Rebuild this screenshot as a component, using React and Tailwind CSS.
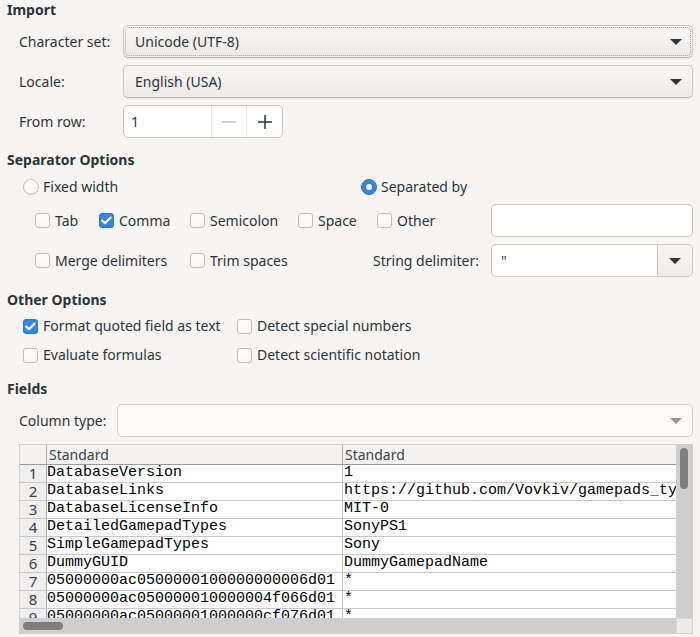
import React from "react";

function Arrow({ color = "#2e3436" }) {
  return (
    <svg width="12" height="6" viewBox="0 0 12 6" className="shrink-0">
      <path d="M0 0H12L6 6Z" fill={color} />
    </svg>
  );
}

function Heading({ children, className = "" }) {
  return (
    <div className={"h-[18px] leading-[19px] pl-[7px] font-bold text-[14px] " + className}>
      {children}
    </div>
  );
}

function Checkbox({ checked }) {
  if (checked) {
    return (
      <span className="w-[15px] h-[15px] shrink-0 rounded-[3px] bg-[#3584e4] border border-[#2a76d4] flex items-center justify-center">
        <svg width="11" height="9" viewBox="0 0 11 9">
          <path d="M1.3 4.6L4.1 7.2L9.6 1.6" stroke="white" strokeWidth="2.2" fill="none" strokeLinecap="round" strokeLinejoin="round" />
        </svg>
      </span>
    );
  }
  return (
    <span className="w-[15px] h-[15px] shrink-0 rounded-[3px] border border-[#c2bdb8] bg-gradient-to-b from-white to-[#f8f7f6]" />
  );
}

function Check({ label, checked, className = "" }) {
  return (
    <div className={"flex items-center gap-[5px] shrink-0 " + className}>
      <Checkbox checked={checked} />
      <span className="whitespace-nowrap">{label}</span>
    </div>
  );
}

function Radio({ label, checked, className = "" }) {
  return (
    <div className={"flex items-center gap-[4px] shrink-0 " + className}>
      {checked ? (
        <span className="w-[16px] h-[16px] rounded-full bg-[#3584e4] border border-[#2a76d4] flex items-center justify-center">
          <span className="w-[6px] h-[6px] rounded-full bg-white" />
        </span>
      ) : (
        <span className="w-[16px] h-[16px] rounded-full border border-[#c2bdb8] bg-gradient-to-b from-white to-[#f8f7f6]" />
      )}
      <span className="whitespace-nowrap">{label}</span>
    </div>
  );
}

function Combo({ text, focused }) {
  return (
    <div className="relative flex-1 h-[33px] rounded-[5px] border border-[#cdc7c2] border-b-[#bfb8b1] bg-gradient-to-b from-[#f6f5f4] to-[#edebe9] shadow-[inset_0_1px_0_white,0_1px_2px_rgba(0,0,0,0.07)] flex items-center pl-[11px] pr-[10px]">
      {focused && (
        <span className="absolute inset-[1px] rounded-[4px] border border-dotted border-[#a8a4a0]" />
      )}
      <span className="flex-1">{text}</span>
      <Arrow />
    </div>
  );
}

function FormRow({ label, labelW, children }) {
  return (
    <div className="flex items-center h-[33px] mr-[7px]">
      <div className={"pl-[19px] shrink-0 " + labelW}>{label}</div>
      {children}
    </div>
  );
}

const rows = [
  ["DatabaseVersion", "1"],
  ["DatabaseLinks", "https://github.com/Vovkiv/gamepads_types"],
  ["DatabaseLicenseInfo", "MIT-0"],
  ["DetailedGamepadTypes", "SonyPS1"],
  ["SimpleGamepadTypes", "Sony"],
  ["DummyGUID", "DummyGamepadName"],
  ["05000000ac0500000100000000006d01", "*"],
  ["05000000ac050000010000004f066d01", "*"],
  ["05000000ac05000001000000cf076d01", "*"],
];

function Grid() {
  return (
    <div className="mt-[7px] ml-[19px] mr-[7px] h-[190px] border border-[#d3cec9] bg-white flex flex-col overflow-hidden">
      <div className="flex h-[173px]">
        <div className="flex-1 overflow-hidden">
          <div className="flex h-[20px] bg-[#f3f2f1] border-b border-[#9a9a9a]">
            <div className="w-[27px] shrink-0 border-r border-[#b0b0b0]" />
            <div className="w-[296px] shrink-0 border-r border-[#b0b0b0] leading-[19px] pl-[2px] text-[#3d4244]">
              Standard
            </div>
            <div className="w-[400px] shrink-0 leading-[19px] pl-[2px] text-[#3d4244]">Standard</div>
          </div>
          {rows.map((r, i) => (
            <div key={i} className="flex h-[18px] border-b border-[#c8c8c8]">
              <div className="w-[27px] shrink-0 bg-[#efefef] border-r border-[#a8a8a8] text-center text-[15px] leading-[16px] text-[#3d4244]">
                {i + 1}
              </div>
              <div className="w-[296px] shrink-0 border-r border-[#c8c8c8] font-['Liberation_Mono',monospace] text-[15px] leading-[16px] text-black whitespace-nowrap overflow-hidden">
                {r[0]}
              </div>
              <div className="w-[400px] shrink-0 pl-[1px] font-['Liberation_Mono',monospace] text-[15px] leading-[16px] text-black whitespace-nowrap">
                {r[1]}
              </div>
            </div>
          ))}
        </div>
        <div className="w-[16px] shrink-0 bg-[#cecece] pt-[3px] pl-[4px]">
          <div className="w-[8px] h-[41px] rounded-full bg-[#7e7e7e]" />
        </div>
      </div>
      <div className="flex h-[15px]">
        <div className="flex-1 bg-[#cecece] pt-[4px] pl-[3px]">
          <div className="w-[40px] h-[8px] rounded-full bg-[#7e7e7e]" />
        </div>
        <div className="w-[16px] shrink-0 bg-[#ebebeb] border-l border-t border-[#d8d8d8]" />
      </div>
    </div>
  );
}

export default function App() {
  return (
    <div className="w-[700px] h-[637px] overflow-hidden bg-[#f6f5f4] text-[#2e3436] font-['Noto_Sans',sans-serif] text-[14px] leading-[18px] flex flex-col">
      <Heading>Import</Heading>
      <div className="mt-[7px] flex flex-col gap-[7px]">
        <FormRow label="Character set:" labelW="w-[123px]">
          <Combo text="Unicode (UTF-8)" focused />
        </FormRow>
        <FormRow label="Locale:" labelW="w-[123px]">
          <Combo text="English (USA)" />
        </FormRow>
        <FormRow label="From row:" labelW="w-[123px]">
          <div className="w-[160px] h-[33px] rounded-[5px] border border-[#cdc7c2] bg-white flex items-stretch">
            <div className="flex-1 flex items-center pl-[7px]">1</div>
            <div className="w-[35px] border-l border-[#e8e6e3] flex items-center justify-center">
              <svg width="16" height="16" viewBox="0 0 16 16">
                <rect x="1" y="7.25" width="14" height="1.5" fill="#c4c2bf" />
              </svg>
            </div>
            <div className="w-[36px] border-l border-[#e8e6e3] flex items-center justify-center">
              <svg width="16" height="16" viewBox="0 0 16 16">
                <rect x="1" y="7.25" width="14" height="1.5" fill="#2e3436" />
                <rect x="7.25" y="1" width="1.5" height="14" fill="#2e3436" />
              </svg>
            </div>
          </div>
        </FormRow>
      </div>

      <Heading className="mt-[12px]">Separator Options</Heading>
      <div className="mt-[9px] h-[20px] flex items-center pl-[23px]">
        <Radio label="Fixed width" className="w-[338px]" />
        <Radio label="Separated by" checked />
      </div>
      <div className="mt-[7px] h-[33px] flex items-center pl-[35px] mr-[7px]">
        <Check label="Tab" className="w-[64px]" />
        <Check label="Comma" checked className="w-[91px]" />
        <Check label="Semicolon" className="w-[108px]" />
        <Check label="Space" className="w-[79px]" />
        <Check label="Other" className="w-[114px]" />
        <div className="flex-1 h-[33px] rounded-[5px] border border-[#cdc7c2] bg-white" />
      </div>
      <div className="mt-[7px] h-[33px] flex items-center pl-[35px] mr-[7px]">
        <Check label="Merge delimiters" className="w-[155px]" />
        <Check label="Trim spaces" className="w-[183px]" />
        <div className="w-[118px] shrink-0">String delimiter:</div>
        <div className="flex-1 h-[33px] rounded-[5px] border border-[#cdc7c2] bg-white flex items-stretch overflow-hidden">
          <div className="flex-1 flex items-center pl-[9px]">"</div>
          <div className="w-[35px] border-l border-[#cdc7c2] bg-gradient-to-b from-[#f6f5f4] to-[#edebe9] flex items-center justify-center">
            <Arrow />
          </div>
        </div>
      </div>

      <Heading className="mt-[13px]">Other Options</Heading>
      <div className="mt-[8px] h-[20px] flex items-center pl-[23px]">
        <Check label="Format quoted field as text" checked className="w-[214px]" />
        <Check label="Detect special numbers" />
      </div>
      <div className="mt-[9px] h-[20px] flex items-center pl-[23px]">
        <Check label="Evaluate formulas" className="w-[214px]" />
        <Check label="Detect scientific notation" />
      </div>

      <Heading className="mt-[14px]">Fields</Heading>
      <div className="mt-[7px]">
        <FormRow label="Column type:" labelW="w-[117px]">
          <div className="flex-1 h-[33px] rounded-[5px] border border-[#d5d0cc] bg-[#faf9f8] flex items-center justify-end pr-[10px]">
            <Arrow color="#929595" />
          </div>
        </FormRow>
      </div>
      <Grid />
    </div>
  );
}
